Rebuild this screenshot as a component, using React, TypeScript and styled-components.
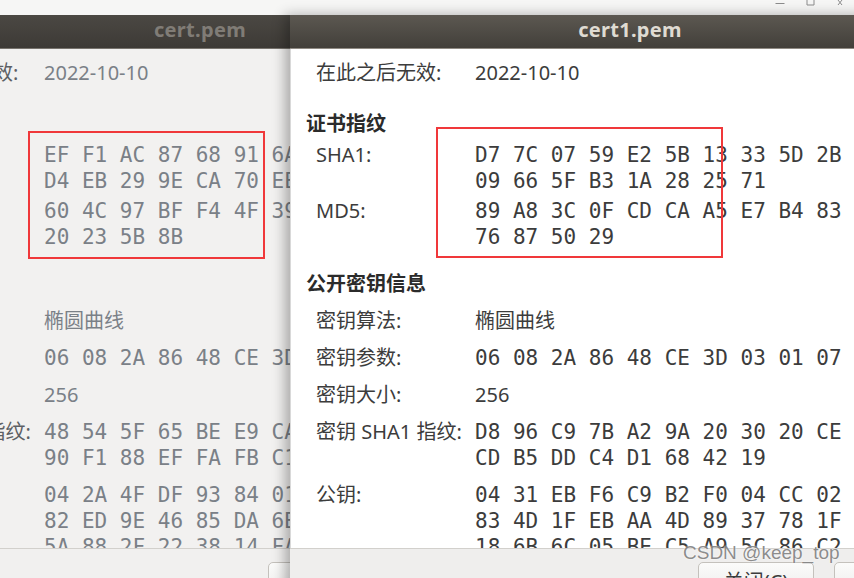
import React from 'react';
import styled, { createGlobalStyle } from 'styled-components';

const GlobalStyle = createGlobalStyle`
  html, body {
    margin: 0;
    padding: 0;
    overflow: hidden;
    background: #f6f6f5;
  }
`;

const Desktop = styled.div`
  position: relative;
  width: 854px;
  height: 578px;
  overflow: hidden;
  background: #f6f6f5;
  font-family: "Noto Sans", "Noto Sans CJK SC", sans-serif;
`;

/* strip of the window lying behind, only its controls peek out */
const TopStrip = styled.div`
  height: 15px;
  display: flex;
  justify-content: flex-end;
  align-items: flex-start;
  gap: 21px;
  padding-right: 10px;
  color: #8c8c8c;
`;

const Window = styled.section<{ $left: number; $active: boolean }>`
  position: absolute;
  top: 15px;
  left: ${(p) => p.$left}px;
  width: 680px;
  height: 620px;
  display: flex;
  flex-direction: column;
  box-shadow: ${(p) => (p.$active ? '-5px 0 12px rgba(0, 0, 0, 0.3)' : 'none')};
  z-index: ${(p) => (p.$active ? 2 : 1)};
`;

const TitleBar = styled.header<{ $active: boolean }>`
  height: 34px;
  flex: none;
  box-sizing: border-box;
  padding-bottom: 5px;
  display: flex;
  align-items: center;
  justify-content: center;
  background: ${(p) =>
    p.$active
      ? 'linear-gradient(#5c5851, #423f3a)'
      : 'linear-gradient(#4b4843, #3d3a36)'};
  border-bottom: 1px solid ${(p) => (p.$active ? '#8f8a83' : '#77736d')};
  color: ${(p) => (p.$active ? '#dfdbd2' : '#807c76')};
  font-size: 20px;
  font-weight: 700;
  letter-spacing: 0.3px;
`;

const Content = styled.div<{ $active: boolean }>`
  height: 499px;
  flex: none;
  overflow: hidden;
  box-sizing: border-box;
  padding: 11px 0 0 15px;
  background: ${(p) => (p.$active ? '#ffffff' : '#f2f1f0')};
  border-left: ${(p) => (p.$active ? '1px solid #d9d9d9' : 'none')};
  --label: ${(p) => (p.$active ? '#3c3c3c' : '#5d6064')};
  --value: ${(p) => (p.$active ? '#3c3c3c' : '#7a8087')};
  --heading: ${(p) => (p.$active ? '#2b2b2b' : '#686b6f')};
`;

const Heading = styled.h3<{ $gap: number }>`
  margin: ${(p) => p.$gap}px 0 0;
  font-size: 20px;
  font-weight: 700;
  line-height: 26px;
  color: var(--heading);
`;

const Group = styled.div<{ $top: number; $gap: number }>`
  display: flex;
  flex-direction: column;
  gap: ${(p) => p.$gap}px;
  margin-top: ${(p) => p.$top}px;
`;

const Row = styled.div<{ $indent?: number }>`
  display: grid;
  grid-template-columns: ${(p) => 159 - (p.$indent ?? 0)}px 1fr;
  padding-left: ${(p) => 10 + (p.$indent ?? 0)}px;
  line-height: 26px;
  font-size: 20px;
`;

const Label = styled.span`
  color: var(--label);
  white-space: nowrap;
`;

const Value = styled.span`
  color: var(--value);
  white-space: nowrap;
`;

const Hex = styled.div`
  font-family: "DejaVu Sans Mono", monospace;
  font-size: 21px;
  line-height: 26px;
  color: var(--value);
  white-space: pre;
`;

const ButtonBar = styled.footer<{ $active: boolean }>`
  flex: 1;
  display: flex;
  justify-content: flex-end;
  align-items: flex-start;
  gap: 20px;
  padding: 13px 20px 0 0;
  background: ${(p) => (p.$active ? '#efeeed' : '#f1f0ef')};
  border-top: 1px solid #d2d0cc;
`;

const Button = styled.button`
  width: 116px;
  height: 36px;
  border: 1px solid #c4c1bc;
  border-radius: 5px;
  background: linear-gradient(#fbfbfa, #ecebe9);
  font-family: "Noto Sans", "Noto Sans CJK SC", sans-serif;
  font-size: 20px;
  color: #3c3c3c;
  padding: 0;
`;

const Annotation = styled.div<{ $x: number; $y: number; $w: number; $h: number }>`
  position: absolute;
  left: ${(p) => p.$x}px;
  top: ${(p) => p.$y}px;
  width: ${(p) => p.$w}px;
  height: ${(p) => p.$h}px;
  box-sizing: border-box;
  border: 2px solid #f0383a;
  z-index: 5;
`;

const Watermark = styled.div`
  position: absolute;
  left: 683px;
  top: 542px;
  font-family: "Liberation Sans", Arial, sans-serif;
  font-size: 19px;
  color: rgba(120, 120, 120, 0.85);
  text-shadow: 0 0 2px #ffffff;
  z-index: 6;
`;

interface CertData {
  notAfter: string;
  sha1: string[];
  md5: string[];
  algorithm: string;
  params: string[];
  size: string;
  keySha1: string[];
  publicKey: string[];
}

const activeCert: CertData = {
  notAfter: '2022-10-10',
  sha1: ['D7 7C 07 59 E2 5B 13 33 5D 2B', '09 66 5F B3 1A 28 25 71'],
  md5: ['89 A8 3C 0F CD CA A5 E7 B4 83', '76 87 50 29'],
  algorithm: '椭圆曲线',
  params: ['06 08 2A 86 48 CE 3D 03 01 07'],
  size: '256',
  keySha1: ['D8 96 C9 7B A2 9A 20 30 20 CE', 'CD B5 DD C4 D1 68 42 19'],
  publicKey: [
    '04 31 EB F6 C9 B2 F0 04 CC 02',
    '83 4D 1F EB AA 4D 89 37 78 1F',
    '18 6B 6C 05 BE C5 A9 5C 86 C2',
    '3A 71 0E 5D 92 C4 18 B7 60 2F',
  ],
};

const otherCert: CertData = {
  notAfter: '2022-10-10',
  sha1: ['EF F1 AC 87 68 91 6A 3E 90 1C', 'D4 EB 29 9E CA 70 EE 41'],
  md5: ['60 4C 97 BF F4 4F 39 D1 0A 5E', '20 23 5B 8B'],
  algorithm: '椭圆曲线',
  params: ['06 08 2A 86 48 CE 3D 03 01 07'],
  size: '256',
  keySha1: ['48 54 5F 65 BE E9 CA 12 7D 3B', '90 F1 88 EF FA FB C1 66'],
  publicKey: [
    '04 2A 4F DF 93 84 01 5C 2E 77',
    '82 ED 9E 46 85 DA 6B 13 F0 A4',
    '5A 88 2F 22 38 14 FA 09 C3 D6',
    '7E 41 B8 0D 25 9F 63 EA 14 5B',
  ],
};

const HexLines = ({ lines }: { lines: string[] }) => (
  <Hex>{lines.join('\n')}</Hex>
);

interface CertWindowProps {
  title: string;
  left: number;
  active: boolean;
  cert: CertData;
}

const CertWindow = ({ title, left, active, cert }: CertWindowProps) => (
  <Window $left={left} $active={active}>
    <TitleBar $active={active}>{title}</TitleBar>
    <Content $active={active}>
      <Row $indent={active ? 0 : 8}>
        <Label>在此之后无效:</Label>
        <Value>{cert.notAfter}</Value>
      </Row>

      <Heading $gap={25}>证书指纹</Heading>
      <Group $top={5} $gap={4}>
        <Row>
          <Label>SHA1:</Label>
          <HexLines lines={cert.sha1} />
        </Row>
        <Row>
          <Label>MD5:</Label>
          <HexLines lines={cert.md5} />
        </Row>
      </Group>

      <Heading $gap={21}>公开密钥信息</Heading>
      <Group $top={11} $gap={11}>
        <Row>
          <Label>密钥算法:</Label>
          <Value>{cert.algorithm}</Value>
        </Row>
        <Row>
          <Label>密钥参数:</Label>
          <HexLines lines={cert.params} />
        </Row>
        <Row>
          <Label>密钥大小:</Label>
          <Value>{cert.size}</Value>
        </Row>
        <Row>
          <Label>密钥 SHA1 指纹:</Label>
          <HexLines lines={cert.keySha1} />
        </Row>
        <Row>
          <Label>公钥:</Label>
          <HexLines lines={cert.publicKey} />
        </Row>
      </Group>
    </Content>
    <ButtonBar $active={active}>
      <Button>关闭(C)</Button>
      <Button>导入(I)</Button>
    </ButtonBar>
  </Window>
);

const App = () => (
  <Desktop>
    <GlobalStyle />
    <TopStrip>
      <svg width="10" height="15" viewBox="0 0 10 15">
        <path d="M0.5 3.5h9" stroke="currentColor" strokeWidth="1" />
      </svg>
      <svg width="9" height="15" viewBox="0 0 9 15">
        <path d="M1 0v5h7V0" fill="none" stroke="currentColor" strokeWidth="1" />
      </svg>
      <svg width="8" height="15" viewBox="0 0 8 15">
        <path d="M2 0l4 5M6 0L2 5" fill="none" stroke="currentColor" strokeWidth="1" />
      </svg>
    </TopStrip>

    <CertWindow title="cert.pem" left={-140} active={false} cert={otherCert} />
    <CertWindow title="cert1.pem" left={290} active cert={activeCert} />

    <Annotation $x={28} $y={131} $w={237} $h={128} />
    <Annotation $x={436} $y={127} $w={287} $h={131} />
    <Watermark>CSDN @keep_top</Watermark>
  </Desktop>
);

export default App;
